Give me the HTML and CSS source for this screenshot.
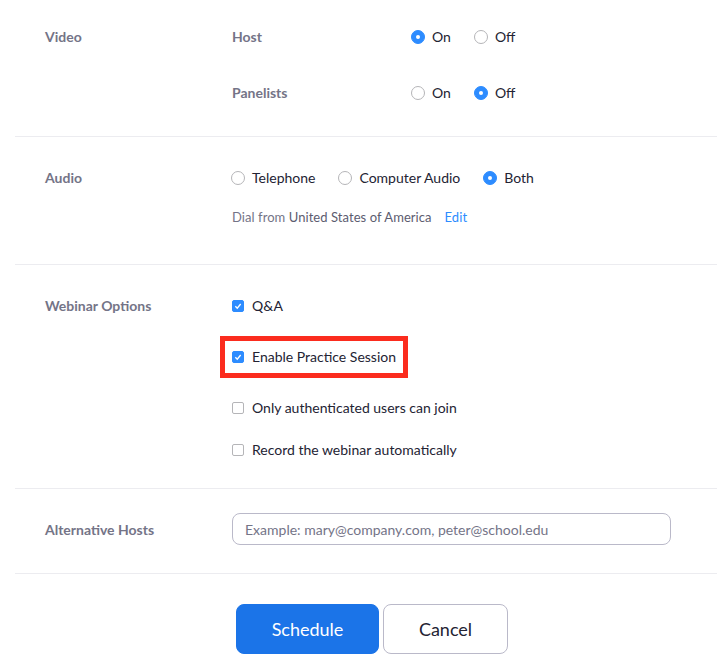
FILE: index.html
```html
<!DOCTYPE html>
<html lang="en">
<head>
<meta charset="utf-8">
<title>Schedule Webinar</title>
<link rel="stylesheet" href="styles.css">
</head>
<body>
<main class="form">
  <section class="section video">
    <div class="label">Video</div>
    <div class="content stack">
      <div class="row">
        <div class="sublabel">Host</div>
        <div class="choice"><span class="radio on"></span>On</div>
        <div class="choice off-choice"><span class="radio"></span>Off</div>
      </div>
      <div class="row">
        <div class="sublabel">Panelists</div>
        <div class="choice"><span class="radio"></span>On</div>
        <div class="choice off-choice"><span class="radio on"></span>Off</div>
      </div>
    </div>
  </section>
  <section class="section audio">
    <div class="label">Audio</div>
    <div class="content">
      <div class="row audio-row">
        <div class="choice"><span class="radio"></span>Telephone</div>
        <div class="choice"><span class="radio"></span>Computer Audio</div>
        <div class="choice"><span class="radio on"></span>Both</div>
      </div>
      <div class="dial">Dial from <span class="country">United States of America</span><a class="edit" href="#">Edit</a></div>
    </div>
  </section>
  <section class="section options">
    <div class="label">Webinar Options</div>
    <div class="content">
      <div class="row check-row"><span class="check on"><svg viewBox="0 0 12 12" class="tick"><path d="M2.8 6.2l2.3 2.4L9.2 3.6"/></svg></span>Q&amp;A</div>
      <div class="row check-row practice"><span class="check on"><svg viewBox="0 0 12 12" class="tick"><path d="M2.8 6.2l2.3 2.4L9.2 3.6"/></svg></span>Enable Practice Session<span class="highlight"></span></div>
      <div class="row check-row"><span class="check"></span>Only authenticated users can join</div>
      <div class="row check-row last"><span class="check"></span>Record the webinar automatically</div>
    </div>
  </section>
  <section class="section alt">
    <div class="label alt-label">Alternative Hosts</div>
    <div class="content"><input class="hosts" type="text" placeholder="Example: mary@company.com, peter@school.edu"></div>
  </section>
  <div class="actions">
    <button class="btn primary" type="button">Schedule</button>
    <button class="btn" type="button">Cancel</button>
  </div>
</main>
</body>
</html>
```
FILE: styles.css
```css
* { box-sizing: border-box; }
html, body { margin: 0; padding: 0; background: #fff; }
body { font-family: Lato, "Liberation Sans", sans-serif; font-size: 14px; color: #232333; width: 717px; height: 672px; overflow: hidden; }
.form { margin-left: 15px; }
.section { display: grid; grid-template-columns: 187px 1fr; padding-left: 30px; border-bottom: 1px solid #ececf0; }
.label { font-weight: 700; color: #747487; line-height: 24px; }
.sublabel { font-weight: 700; color: #747487; width: 179px; }
.content { min-width: 0; }
.row { display: flex; align-items: center; height: 24px; padding-bottom: 2px; }
.choice { display: flex; align-items: center; }
.off-choice { margin-left: 23px; }
.radio { width: 14px; height: 14px; border-radius: 50%; border: 1px solid #b5b5b8; background: #fff; margin-right: 7px; margin-top: 2px; flex: none; position: relative; }
.radio.on { background: #2d8cff; border-color: #2d8cff; }
.radio.on::after { content: ""; position: absolute; left: 4px; top: 4px; width: 4px; height: 4px; border-radius: 50%; background: #fff; }
.video { padding-top: 25px; padding-bottom: 31px; }
.stack { display: flex; flex-direction: column; gap: 32px; }
.audio { padding-top: 29px; padding-bottom: 37px; }
.audio-row { margin-left: -1px; gap: 23px; }
.dial { margin-top: 17px; height: 20px; line-height: 20px; font-size: 13px; letter-spacing: 0.06px; color: #747487; }
.country { color: #5c5c70; }
.edit { color: #2d8cff; text-decoration: none; margin-left: 13px; }
.options { padding-top: 29px; padding-bottom: 26px; }
.check-row { margin-top: 27px; position: relative; }
.check-row:first-child { margin-top: 0; }
.check-row.last { margin-top: 18px; }
.check { width: 12px; height: 12px; border-radius: 2px; border: 1px solid #b5b5b8; background: #fff; margin-right: 8px; margin-top: 2px; flex: none; display: flex; }
.check.on { background: #2d8cff; border-color: #2d8cff; }
.tick { width: 10px; height: 10px; fill: none; stroke: #fff; stroke-width: 1.6; }
.highlight { position: absolute; left: -12px; top: -9px; width: 188px; height: 42px; border: 5px solid #fb2c1e; }
.alt { padding-top: 24px; padding-bottom: 28px; }
.alt-label { line-height: 30px; padding-top: 2px; }
.hosts { display: block; width: 439px; height: 32px; border: 1px solid #bab9c9; border-radius: 8px; padding: 0 12px; font: 14px Lato, "Liberation Sans", sans-serif; color: #232333; background: #fff; outline: none; }
.hosts::placeholder { color: #747487; opacity: 1; }
.actions { display: flex; gap: 4px; padding: 30px 0 0 221px; }
.btn { width: 125px; height: 50px; border: 1px solid #bab9c9; border-radius: 8px; background: #fff; color: #232333; font: 18px Lato, "Liberation Sans", sans-serif; padding: 0; }
.btn.primary { width: 143px; background: #1b74e8; border-color: #1b74e8; color: #fff; }
```
